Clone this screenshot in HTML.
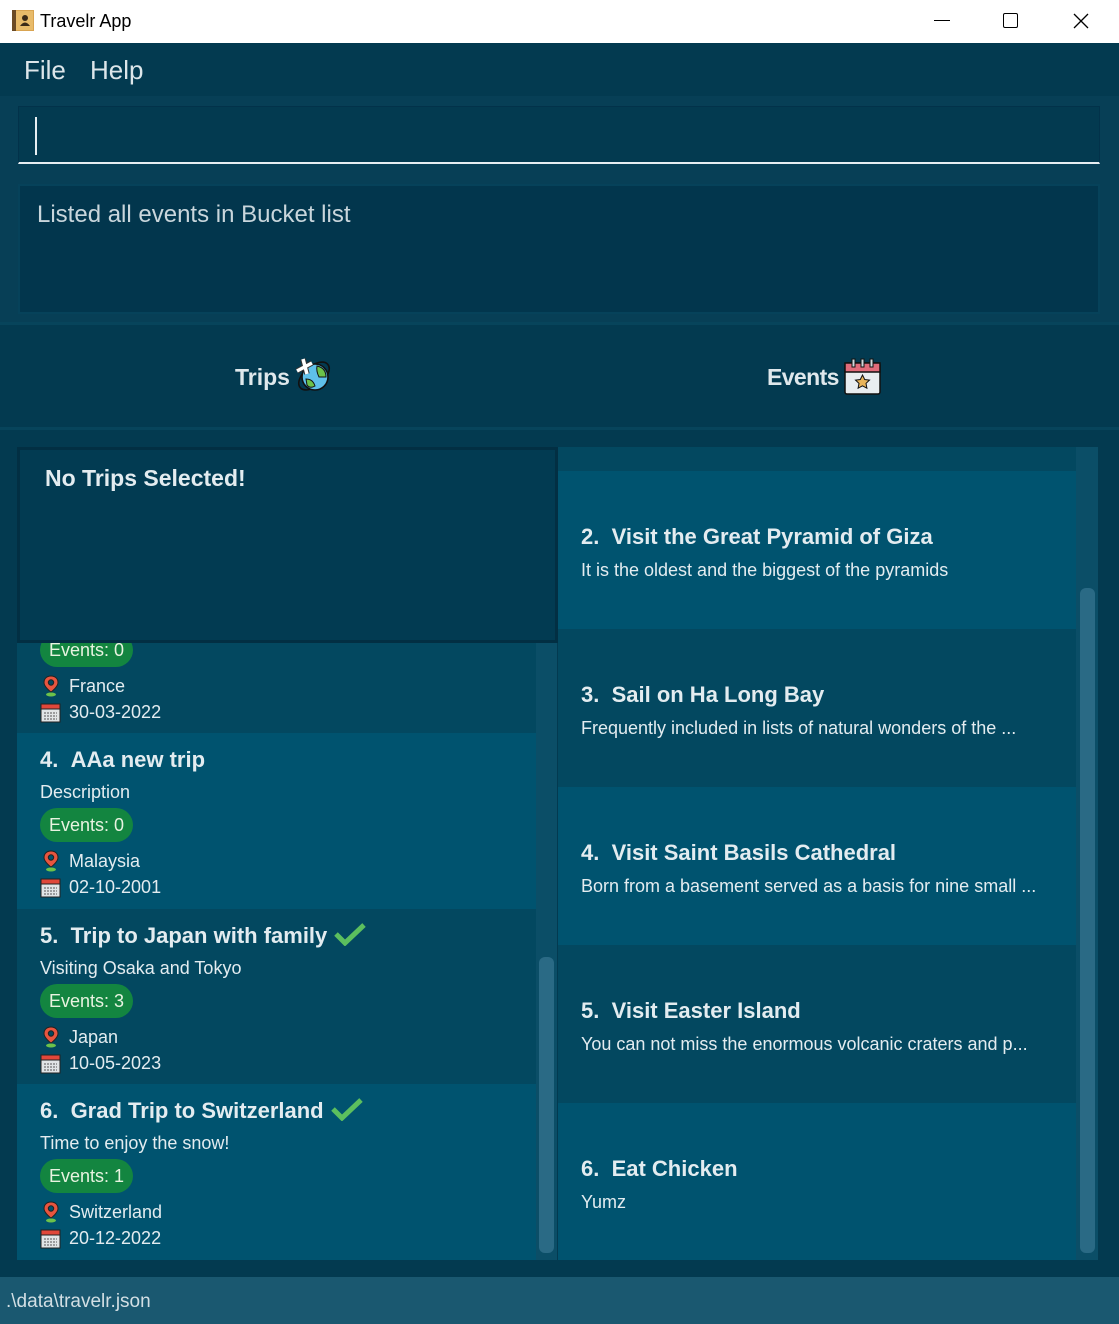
<!DOCTYPE html>
<html><head><meta charset="utf-8"><style>
*{margin:0;padding:0;box-sizing:border-box}
body{width:1119px;height:1324px;overflow:hidden;background:#033a50;font-family:"Liberation Sans",sans-serif;color:#e3ecf0;position:relative}
.a{position:absolute}
.title{left:0;top:0;width:1119px;height:43px;background:#fff;color:#000}
.menu{top:43px;left:0;width:1119px;height:53px;background:#033a50}
.card{position:absolute;left:0;width:100%}
.t{position:absolute;font-weight:bold;font-size:22px;white-space:nowrap}
.d{position:absolute;font-size:18px;white-space:nowrap}
.pill{position:absolute;background:#138540;border-radius:18px;height:34px;line-height:34px;padding:0 9px;font-size:18px;color:#e8f3e0}
.ic{position:absolute}
</style></head><body>
<div class="a title">
  <svg class="a" style="left:12px;top:10px" width="22" height="21" viewBox="0 0 22 21"><rect x="0" y="0" width="22" height="21" fill="#d9a451"/><rect x="0" y="0" width="4" height="21" fill="#6b4a25"/><rect x="4" y="1" width="17" height="19" fill="#e8bb6a"/><circle cx="13" cy="8" r="3" fill="#3a2a18"/><path d="M8 16 Q13 9 18 16Z" fill="#3a2a18"/></svg>
  <div class="a" style="left:40px;top:11px;font-size:18px">Travelr App</div>
  <div class="a" style="left:934px;top:20px;width:16px;height:1px;background:#000"></div>
  <div class="a" style="left:1003px;top:13px;width:15px;height:15px;border:1.5px solid #000;border-radius:2px"></div>
  <svg class="a" style="left:1073px;top:13px" width="16" height="16"><path d="M1 1L15 15M15 1L1 15" stroke="#000" stroke-width="1.3"/></svg>
</div>
<div class="a menu"><span class="a" style="left:24px;top:12px;font-size:26px;color:#dde6ea">File</span><span class="a" style="left:90px;top:12px;font-size:26px;color:#dde6ea">Help</span></div>
<div class="a" style="left:0;top:96px;width:1119px;height:76px;background:#073f56"></div>
<div class="a" style="left:18px;top:106px;width:1082px;height:58px;background:#033a50;border:1px solid #02324a;border-bottom:2px solid #e6eef2"></div>
<div class="a" style="left:35px;top:117px;width:2px;height:38px;background:#e6eef2"></div>
<div class="a" style="left:0;top:172px;width:1119px;height:150px;background:#073f56"></div>
<div class="a" style="left:18px;top:184px;width:1082px;height:130px;background:#02364d;border:2px solid #06425a"></div>
<div class="a" style="left:37px;top:201px;font-size:24px;color:#c9d6dc">Listed all events in Bucket list</div>
<div class="a" style="left:0;top:322px;width:1119px;height:108px;background:#033a50;border-top:3px solid #07445b;border-bottom:3px solid #07445b"></div>
<div class="a" style="left:235px;top:364px;font-size:23px;font-weight:bold;color:#dfe8ec">Trips</div>
<svg class="a" style="left:294px;top:356px" width="40" height="40" viewBox="0 0 40 40"><ellipse cx="20" cy="20" rx="18" ry="10" transform="rotate(-40 20 20)" fill="none" stroke="#111" stroke-width="1.6"/><circle cx="21" cy="21" r="13" fill="#5fc0ea" stroke="#111" stroke-width="1.6"/><path d="M23 10 Q32 12 32 21 L25 21 Q22 15 23 10Z" fill="#6cc24a" stroke="#111" stroke-width="1"/><path d="M12 23 Q19 23 21 30 Q16 33 13 29Z" fill="#6cc24a" stroke="#111" stroke-width="1"/><path d="M3 15 L18 7 M9 3 L13 18" stroke="#333" stroke-width="5.5"/><path d="M3 15 L18 7 M9 3 L13 18" stroke="#fff" stroke-width="3.5"/></svg>
<div class="a" style="left:767px;top:364px;font-size:23px;font-weight:bold;color:#dfe8ec;letter-spacing:-0.6px">Events</div>
<svg class="a" style="left:843px;top:358px" width="39" height="38" viewBox="0 0 39 38"><rect x="2" y="5" width="35" height="31" rx="2" fill="#e8edf0" stroke="#111" stroke-width="1.5"/><rect x="2" y="5" width="35" height="9" fill="#e06b7a" stroke="#111" stroke-width="1.5"/><rect x="9" y="1" width="3" height="8" fill="#cfd8dc" stroke="#111"/><rect x="18" y="1" width="3" height="8" fill="#cfd8dc" stroke="#111"/><rect x="27" y="1" width="3" height="8" fill="#cfd8dc" stroke="#111"/><path d="M19.5 17l2.2 4.5 4.8.6-3.5 3.3.9 4.8-4.4-2.4-4.4 2.4.9-4.8-3.5-3.3 4.8-.6z" fill="#e8b45a" stroke="#111" stroke-width="1"/></svg>
<div class="a" style="left:0;top:430px;width:1119px;height:847px;background:#033a50"></div>

<!-- left list -->
<div class="a" style="left:17px;top:447px;width:540px;height:813px;background:#034860;overflow:hidden">
  <div class="card" style="top:0;height:286px;background:#034860">
    <div class="pill" style="left:23px;top:186px">Events: 0</div>
    <svg class="ic" style="left:25px;top:228px" width="18" height="22" viewBox="0 0 18 22"><path d="M9 1C4.5 1 2 4 2 7.5 2 12 9 17 9 17S16 12 16 7.5C16 4 13.5 1 9 1Z" fill="#e8553f" stroke="#222" stroke-width="1"/><circle cx="9" cy="7.5" r="2.7" fill="#034860" stroke="#222"/><ellipse cx="9" cy="19.5" rx="5" ry="2" fill="#6cc24a"/></svg>
    <div class="d" style="left:52px;top:229px">France</div>
    <svg class="ic" style="left:23px;top:254px" width="22" height="22" viewBox="0 0 22 22"><rect x="1" y="3" width="19" height="18" fill="#e1e4e6" stroke="#222"/><rect x="1" y="3" width="19" height="5" fill="#e0473a" stroke="#222"/><path d="M4 12h13M4 15h13M4 18h13" stroke="#555" stroke-dasharray="2 1"/></svg>
    <div class="d" style="left:52px;top:255px">30-03-2022</div>
  </div>
  <div class="card" style="top:286px;height:176px;background:#00536f">
    <div class="t" style="left:23px;top:14px">4.&nbsp;&nbsp;AAa new trip</div>
    <div class="d" style="left:23px;top:49px">Description</div>
    <div class="pill" style="left:23px;top:75px">Events: 0</div>
    <svg class="ic" style="left:25px;top:117px" width="18" height="22" viewBox="0 0 18 22"><path d="M9 1C4.5 1 2 4 2 7.5 2 12 9 17 9 17S16 12 16 7.5C16 4 13.5 1 9 1Z" fill="#e8553f" stroke="#222" stroke-width="1"/><circle cx="9" cy="7.5" r="2.7" fill="#00536f" stroke="#222"/><ellipse cx="9" cy="19.5" rx="5" ry="2" fill="#6cc24a"/></svg>
    <div class="d" style="left:52px;top:118px">Malaysia</div>
    <svg class="ic" style="left:23px;top:143px" width="22" height="22" viewBox="0 0 22 22"><rect x="1" y="3" width="19" height="18" fill="#e1e4e6" stroke="#222"/><rect x="1" y="3" width="19" height="5" fill="#e0473a" stroke="#222"/><path d="M4 12h13M4 15h13M4 18h13" stroke="#555" stroke-dasharray="2 1"/></svg>
    <div class="d" style="left:52px;top:144px">02-10-2001</div>
  </div>
  <div class="card" style="top:462px;height:175px;background:#034860">
    <div class="t" style="left:23px;top:13px">5.&nbsp;&nbsp;Trip to Japan with family <svg width="34" height="24" viewBox="0 0 34 24" style="vertical-align:-3px"><path d="M3 12l9 9L31 3" fill="none" stroke="#5cbf5e" stroke-width="5"/></svg></div>
    <div class="d" style="left:23px;top:49px">Visiting Osaka and Tokyo</div>
    <div class="pill" style="left:23px;top:75px">Events: 3</div>
    <svg class="ic" style="left:25px;top:117px" width="18" height="22" viewBox="0 0 18 22"><path d="M9 1C4.5 1 2 4 2 7.5 2 12 9 17 9 17S16 12 16 7.5C16 4 13.5 1 9 1Z" fill="#e8553f" stroke="#222" stroke-width="1"/><circle cx="9" cy="7.5" r="2.7" fill="#034860" stroke="#222"/><ellipse cx="9" cy="19.5" rx="5" ry="2" fill="#6cc24a"/></svg>
    <div class="d" style="left:52px;top:118px">Japan</div>
    <svg class="ic" style="left:23px;top:143px" width="22" height="22" viewBox="0 0 22 22"><rect x="1" y="3" width="19" height="18" fill="#e1e4e6" stroke="#222"/><rect x="1" y="3" width="19" height="5" fill="#e0473a" stroke="#222"/><path d="M4 12h13M4 15h13M4 18h13" stroke="#555" stroke-dasharray="2 1"/></svg>
    <div class="d" style="left:52px;top:144px">10-05-2023</div>
  </div>
  <div class="card" style="top:637px;height:176px;background:#00536f">
    <div class="t" style="left:23px;top:13px">6.&nbsp;&nbsp;Grad Trip to Switzerland <svg width="34" height="24" viewBox="0 0 34 24" style="vertical-align:-3px"><path d="M3 12l9 9L31 3" fill="none" stroke="#5cbf5e" stroke-width="5"/></svg></div>
    <div class="d" style="left:23px;top:49px">Time to enjoy the snow!</div>
    <div class="pill" style="left:23px;top:75px">Events: 1</div>
    <svg class="ic" style="left:25px;top:117px" width="18" height="22" viewBox="0 0 18 22"><path d="M9 1C4.5 1 2 4 2 7.5 2 12 9 17 9 17S16 12 16 7.5C16 4 13.5 1 9 1Z" fill="#e8553f" stroke="#222" stroke-width="1"/><circle cx="9" cy="7.5" r="2.7" fill="#00536f" stroke="#222"/><ellipse cx="9" cy="19.5" rx="5" ry="2" fill="#6cc24a"/></svg>
    <div class="d" style="left:52px;top:118px">Switzerland</div>
    <svg class="ic" style="left:23px;top:143px" width="22" height="22" viewBox="0 0 22 22"><rect x="1" y="3" width="19" height="18" fill="#e1e4e6" stroke="#222"/><rect x="1" y="3" width="19" height="5" fill="#e0473a" stroke="#222"/><path d="M4 12h13M4 15h13M4 18h13" stroke="#555" stroke-dasharray="2 1"/></svg>
    <div class="d" style="left:52px;top:144px">20-12-2022</div>
  </div>
  <div class="a" style="left:519px;top:0;width:21px;height:813px;background:#0b4e67"></div>
  <div class="a" style="left:522px;top:510px;width:15px;height:296px;background:#2a6a85;border-radius:6px"></div>
</div>
<div class="a" style="left:17px;top:447px;width:541px;height:196px;background:#023b52;border:3px solid #022f43"></div>
<div class="a" style="left:45px;top:465px;font-size:23px;font-weight:bold">No Trips Selected!</div>

<!-- right list -->
<div class="a" style="left:558px;top:447px;width:540px;height:813px;background:#034860;overflow:hidden">
  <div class="card" style="top:24px;height:158px;background:#00536f"><div class="t" style="left:23px;top:53px">2.&nbsp;&nbsp;Visit the Great Pyramid of Giza</div><div class="d" style="left:23px;top:89px">It is the oldest and the biggest of the pyramids</div></div>
  <div class="card" style="top:182px;height:158px;background:#034860"><div class="t" style="left:23px;top:53px">3.&nbsp;&nbsp;Sail on Ha Long Bay</div><div class="d" style="left:23px;top:89px">Frequently included in lists of natural wonders of the ...</div></div>
  <div class="card" style="top:340px;height:158px;background:#00536f"><div class="t" style="left:23px;top:53px">4.&nbsp;&nbsp;Visit Saint Basils Cathedral</div><div class="d" style="left:23px;top:89px">Born from a basement served as a basis for nine small ...</div></div>
  <div class="card" style="top:498px;height:158px;background:#034860"><div class="t" style="left:23px;top:53px">5.&nbsp;&nbsp;Visit Easter Island</div><div class="d" style="left:23px;top:89px">You can not miss the enormous volcanic craters and p...</div></div>
  <div class="card" style="top:656px;height:157px;background:#00536f"><div class="t" style="left:23px;top:53px">6.&nbsp;&nbsp;Eat Chicken</div><div class="d" style="left:23px;top:89px">Yumz</div></div>
  <div class="a" style="left:518px;top:0;width:22px;height:813px;background:#0b4e67"></div>
  <div class="a" style="left:522px;top:141px;width:15px;height:665px;background:#2a6a85;border-radius:6px"></div>
</div>
<div class="a" style="left:0;top:1277px;width:1119px;height:47px;background:#1a5870"></div>
<div class="a" style="left:6px;top:1291px;font-size:19px;color:#d3dfe4">.\data\travelr.json</div>
</body></html>
